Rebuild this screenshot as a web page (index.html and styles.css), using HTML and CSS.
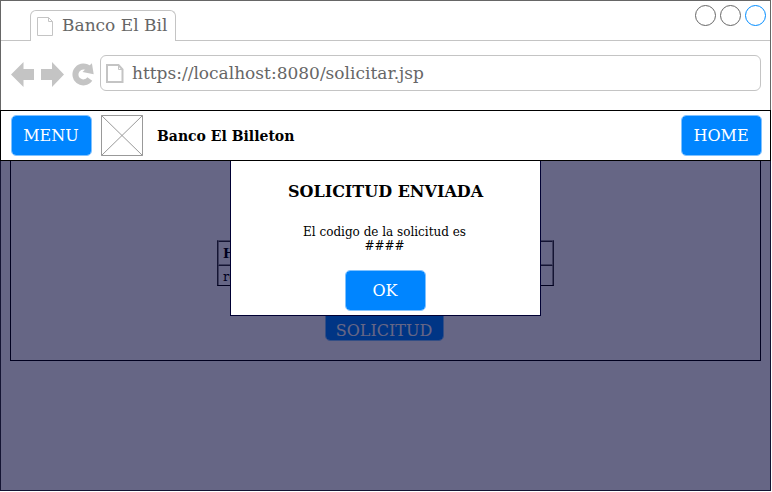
FILE: index.html
```html
<!DOCTYPE html>
<html lang="es">
<head>
<meta charset="utf-8">
<title>Banco El Billeton</title>
<link rel="stylesheet" href="styles.css">
</head>
<body>
<div class="window">
  <div class="tabbar">
    <div class="tab">
      <svg class="tab-icon" width="17" height="20" viewBox="0 0 17 20"><path d="M.5.5h11l4 4v14H.5zM11.5.5v4h4" fill="none" stroke="#c4c4c4"/></svg>
      <span class="tab-title">Banco El Bil</span>
    </div>
    <div class="controls"><i class="dot"></i><i class="dot"></i><i class="dot dot-active"></i></div>
  </div>
  <div class="toolbar">
    <svg class="nav" width="88" height="30" viewBox="0 0 88 30" fill="#c4c4c4">
      <path d="M0 14.5 12.500 2v7H23v11H12.500v7z"/>
      <path d="M53 14.500 41 2v7H30v11h11v7z"/>
      <path d="M78.800 19A7.900 7.900 0 1 1 78 9" fill="none" stroke="#c4c4c4" stroke-width="6"/>
      <path d="M80.900 3.300 82.700 14.200 71.500 12z"/>
    </svg>
    <div class="url">
      <svg class="url-icon" width="18" height="21" viewBox="0 0 18 21"><path d="M1 2h11.500l4 4.500v12.500H1z" fill="none" stroke="#c4c4c4" stroke-width="2"/><path d="M12.500 2v4.500h4" fill="none" stroke="#c4c4c4"/></svg>
      <span>https://localhost:8080/solicitar.jsp</span>
    </div>
  </div>
  <header class="header">
    <button class="btn">MENU</button>
    <svg class="logo" width="42" height="41" viewBox="0 0 42 41"><path d="M.5.5h41v40H.5zL41.500 40.500M41.500.5.5 40.500" fill="none" stroke="#999"/></svg>
    <h1 class="brand">Banco El Billeton</h1>
    <button class="btn home">HOME</button>
  </header>
  <main class="page">
    <section class="content">
      <table class="results">
        <tr><th>H</th></tr>
        <tr><td>re</td></tr>
      </table>
      <button class="btn request">SOLICITUD</button>
    </section>
    <div class="overlay">
      <div class="dialog">
        <h2 class="dialog-title">SOLICITUD ENVIADA</h2>
        <p class="dialog-text">El codigo de la solicitud es<br>####</p>
        <button class="btn">OK</button>
      </div>
    </div>
  </main>
</div>
</body>
</html>
```

FILE: styles.css
```css
* { box-sizing: border-box; }
body { margin: 0; background: #fff; font-family: "DejaVu Serif", serif; }
.window { width: 771px; height: 491px; border: 1px solid #666; display: flex; flex-direction: column; }
.tabbar { height: 40px; flex: none; border-bottom: 1px solid #c4c4c4; display: flex; align-items: flex-start; justify-content: space-between; padding: 4px 4px 0 29px; }
.tab { width: 146px; height: 31px; margin-top: 5px; border: 1px solid #c4c4c4; border-bottom: 0; border-radius: 6px 6px 0 0; background: #fff; display: flex; padding: 6px 0 0 6px; color: #666; }
.tab-icon { flex: none; margin-right: 8px; }
.tab-title { font-size: 17px; line-height: 20px; margin-top: -2px; white-space: nowrap; }
.controls { display: flex; gap: 4px; }
.dot { width: 21px; height: 21px; border: 1px solid #666; border-radius: 50%; }
.dot-active { border-color: #008cff; }
.toolbar { height: 69px; flex: none; display: flex; padding: 14px 9px 0 10px; }
.nav { flex: none; margin: 5px 1px 0 0; }
.url { flex: 1; height: 36px; border: 1px solid #c4c4c4; border-radius: 6px; display: flex; align-items: center; padding-left: 5px; gap: 8px; color: #666; font-size: 17px; }
.header { position: relative; z-index: 2; height: 51px; flex: none; margin: 0 -1px; border: 1px solid #000; background: #fff; display: flex; align-items: center; padding: 0 8px 0 10px; }
.btn { width: 81px; height: 41px; flex: none; padding: 0 1px 0 0; border: 1px solid #80c2ff; border-radius: 5px; background: #0085ff; background-clip: padding-box; color: #fff; font: 16px/39px "DejaVu Serif", serif; text-align: center; }
.logo { margin: 0 14px 0 9px; }
.brand { margin: 0; font-size: 14px; line-height: 18px; }
.home { margin-left: auto; }
.page { position: relative; flex: 1; margin: 0 -1px -1px; border: 1px solid #333; border-top: 0; }
.content { height: 200px; margin: 0 9px; border: 1px solid #000; border-top: 0; display: flex; flex-direction: column; align-items: center; padding-top: 79px; }
.results { width: 337px; height: 46px; border-spacing: 0; border: 1px solid #333; border-color: #999 #333 #000 #333; }
.results th, .results td { height: 24px; border: 1px solid #333; border-color: #333 #999 #999 #999; padding: 1px 0 0 4px; text-align: left; font-size: 13px; line-height: 16px; }
.results td { height: 20px; border-bottom: 0; padding-top: 3px; font-size: 13px; }
.request { width: 119px; margin: 14px 2px 0 0; line-height: 59px; }
.overlay { position: absolute; inset: 0 -1px -1px; background: rgba(0, 0, 51, .6); display: flex; justify-content: center; align-items: flex-start; }
.dialog { width: 311px; height: 155px; background: #fff; border: 1px solid #000033; border-top: 0; display: flex; flex-direction: column; align-items: center; }
.dialog-title { margin: 21px 0 0; font-size: 16px; line-height: 20px; }
.dialog-text { margin: 23px 2px 17px 0; font-size: 12px; line-height: 14px; text-align: center; }
```
